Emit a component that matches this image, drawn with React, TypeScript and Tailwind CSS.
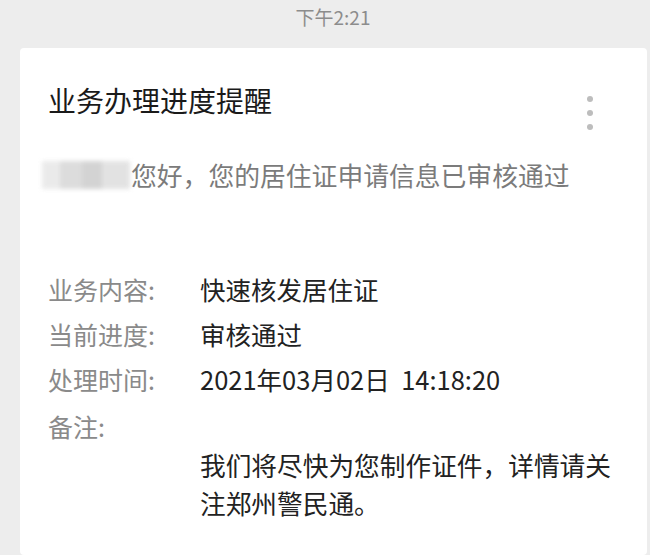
const FONT = {
  fontFamily: '"Noto Sans CJK SC", "Noto Sans", Roboto, sans-serif',
};

const ROWS = [
  { label: "业务内容:", value: "快速核发居住证" },
  { label: "当前进度:", value: "审核通过" },
  { label: "处理时间:", value: "2021年03月02日  14:18:20" },
];

export default function App() {
  return (
    <div
      className="w-[650px] h-[555px] overflow-hidden bg-[#ededed] flex flex-col"
      style={FONT}
    >
      {/* time stamp */}
      <div className="h-[48px] flex justify-center pt-[3px]">
        <span className="text-[19px] leading-[28px] text-[#8c8c8c] ml-[16px]">
          下午2:21
        </span>
      </div>

      {/* card */}
      <div className="ml-[20px] w-[627px] flex-1 bg-white rounded-[4px] pl-[28px] pr-[16px]">
        <div className="flex items-start justify-between pt-[32px]">
          <h1 className="text-[28px] leading-[40px] text-[#1a1a1a] font-normal">
            业务办理进度提醒
          </h1>
          <div className="flex flex-col gap-[8px] pt-[16px] mr-[38px]">
            <span className="w-[6px] h-[6px] rounded-full bg-[#bdbdbd]" />
            <span className="w-[6px] h-[6px] rounded-full bg-[#bdbdbd]" />
            <span className="w-[6px] h-[6px] rounded-full bg-[#bdbdbd]" />
          </div>
        </div>

        {/* greeting */}
        <div className="flex items-center mt-[26px] -ml-[6px]">
          <div className="w-[88px] h-[28px] flex blur-[2px] opacity-80">
            <span className="w-[18px] bg-[#e6e6e6]" />
            <span className="w-[22px] bg-[#d4d4d4]" />
            <span className="w-[20px] bg-[#c9c9c9]" />
            <span className="w-[28px] bg-[#dcdcdc]" />
          </div>
          <span className="text-[25.8px] leading-[38px] text-[#7b7b7b] ml-[1px]">
            您好，您的居住证申请信息已审核通过
          </span>
        </div>

        {/* details */}
        <div className="mt-[73px] flex flex-col">
          {ROWS.map((r) => (
            <div key={r.label} className="flex h-[45px] items-center">
              <span className="w-[152px] text-[25px] text-[#8a8a8a]">
                {r.label}
              </span>
              <span className="text-[25.5px] text-[#222] whitespace-pre">
                {r.value}
              </span>
            </div>
          ))}
          <div className="flex h-[45px] items-center mt-[2px]">
            <span className="text-[25px] text-[#8a8a8a]">备注:</span>
          </div>
          <p className="ml-[152px] -mt-[3px] w-[420px] text-[25.7px] leading-[38px] text-[#222]">
            我们将尽快为您制作证件，详情请关注郑州警民通。
          </p>
        </div>
      </div>
    </div>
  );
}
